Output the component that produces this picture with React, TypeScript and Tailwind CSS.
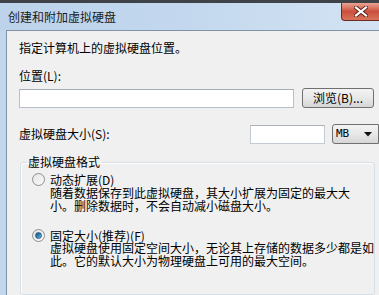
function Radio({ checked }: { checked?: boolean }) {
  return (
    <span className="w-[13px] h-[13px] rounded-full border border-[#8e8f8f] bg-gradient-to-br from-[#e4e4e4] to-[#fafafa] flex items-center justify-center shrink-0">
      {checked && (
        <span className="w-[7px] h-[7px] rounded-full bg-gradient-to-br from-[#1b5f8c] via-[#2a7bb6] to-[#8cc7ee] border border-[#2d5d7e]" />
      )}
    </span>
  );
}

export default function App() {
  return (
    <div className="w-[379px] h-[295px] overflow-hidden bg-[#c2d7ed] flex flex-col text-[12px] text-black font-['Noto_Sans_CJK_SC',sans-serif]">
      <div className="h-[3px] bg-[#3f4347] shrink-0" />
      <div className="relative h-[27px] shrink-0 flex items-center pl-[8px] bg-gradient-to-r from-[#bcd3eb] via-[#c3d8ee] to-[#d3e3f3]">
        <span className="leading-[14px] text-[#1a1a1a]">创建和附加虚拟硬盘</span>
        <div className="absolute right-0 top-0 w-[38px] h-[18px] rounded-bl-[4px] border-l border-b border-[#6b2a22] bg-gradient-to-b from-[#e9a493] via-[#c9503d] to-[#d9735a] flex items-center justify-center">
          <svg width="14" height="11" viewBox="0 0 14 11">
            <path d="M2 1.5 L12 9.5 M12 1.5 L2 9.5" stroke="#5a2018" strokeWidth="4" strokeLinecap="square" />
            <path d="M2 1.5 L12 9.5 M12 1.5 L2 9.5" stroke="#ffffff" strokeWidth="2.2" strokeLinecap="square" />
          </svg>
        </div>
      </div>
      <div className="flex-1 flex">
        <div className="w-[6px] shrink-0" />
        <div className="flex-1 flex flex-col border-l border-t border-[#8393a6] bg-[#f0f0f0]">
          <div className="pl-3 pt-[10px] leading-[14px]">指定计算机上的虚拟硬盘位置。</div>
          <div className="pl-3 mt-[14px] leading-[14px]">位置(L):</div>
          <div className="pl-3 mt-[5px] flex items-center h-[20px]">
            <div className="w-[275px] h-[19px] bg-white border border-[#b8c0ca] border-t-[#a3abb5]" />
            <div className="ml-[8px] w-[72px] h-[20px] rounded-[3px] border border-[#707070] bg-gradient-to-b from-[#f3f3f3] via-[#e8e8e8] to-[#d6d6d6] flex items-center justify-center leading-[14px]">
              浏览(B)...
            </div>
          </div>
          <div className="pl-3 mt-[16px] flex items-center h-[20px]">
            <span className="flex-1 leading-[14px]">虚拟硬盘大小(S):</span>
            <div className="w-[75px] h-[19px] bg-white border border-[#c3cad3] border-t-[#a9b1bb]" />
            <div className="ml-[7px] w-[47px] h-[20px] rounded-l-[3px] border border-[#707070] bg-gradient-to-b from-[#f3f3f3] via-[#e8e8e8] to-[#d6d6d6] flex items-center pl-[3px] pr-[6px]">
              <span className="flex-1 text-[11px] leading-[12px] font-['DejaVu_Sans_Mono',monospace]">MB</span>
              <svg width="8" height="5" viewBox="0 0 8 5">
                <path d="M0 0 L8 0 L4 4.5 Z" fill="#111" />
              </svg>
            </div>
          </div>
          <fieldset className="ml-[13px] mt-[11px] w-[355px] h-[140px] border border-[#d5dfe5] rounded-[3px] pl-[6px] shadow-[inset_1px_1px_0_#ffffff]">
            <legend className="px-[1px] leading-[14px]">虚拟硬盘格式</legend>
            <div className="pl-[5px] mt-[4px] flex items-center gap-[5px] h-[13px] leading-[13px]">
              <Radio />
              <span>动态扩展(D)</span>
            </div>
            <div className="pl-[23px] leading-[13px]">
              随着数据保存到此虚拟硬盘，其大小扩展为固定的最大大
              <br />
              小。删除数据时，不会自动减小磁盘大小。
            </div>
            <div className="pl-[5px] mt-[17px] flex items-center gap-[5px] h-[13px] leading-[13px]">
              <Radio checked />
              <span>固定大小(推荐)(F)</span>
            </div>
            <div className="pl-[23px] leading-[12.5px]">
              虚拟硬盘使用固定空间大小，无论其上存储的数据多少都是如
              <br />
              此。它的默认大小为物理硬盘上可用的最大空间。
            </div>
          </fieldset>
        </div>
      </div>
    </div>
  );
}
